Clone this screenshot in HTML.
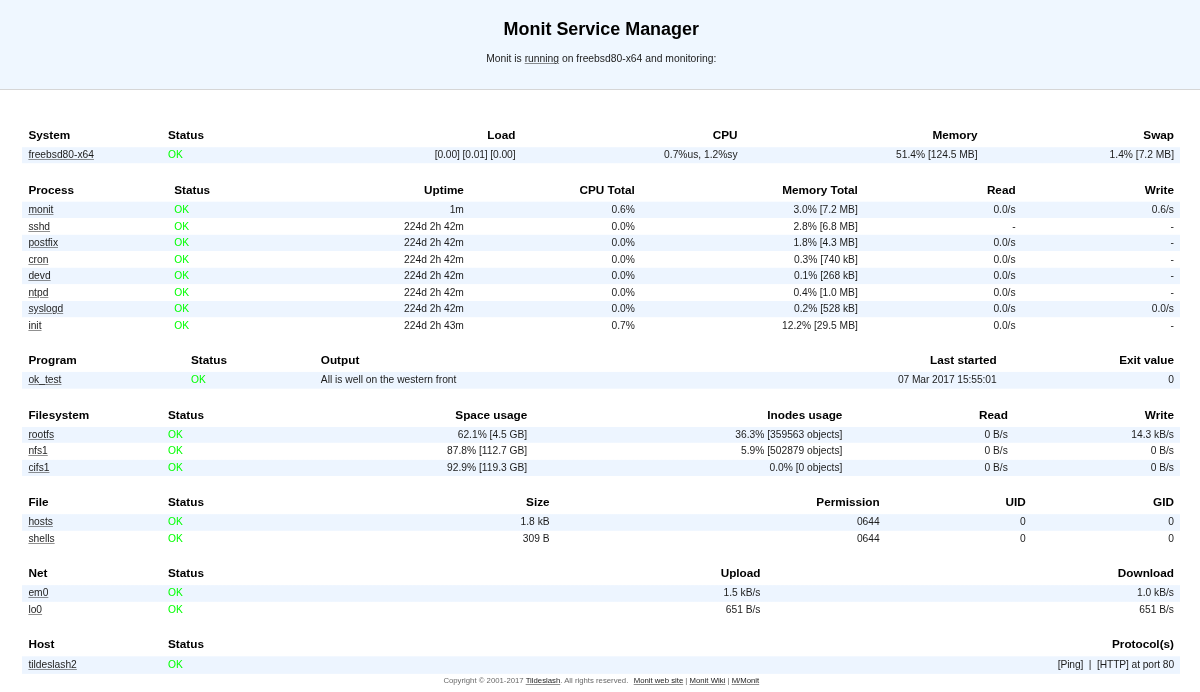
<!DOCTYPE html>
<html><head><meta charset="utf-8"><title>Monit: freebsd80-x64</title>
<style>
html,body{margin:0;padding:0;}
body{background:#fff;color:#1c1c1c;font-family:"Liberation Sans",sans-serif;font-size:10.25px;width:1200px;height:692px;overflow:hidden;position:relative;}
a{color:#1c1c1c;text-decoration:underline;text-decoration-color:rgba(34,34,34,.5);text-decoration-thickness:1px;}
#header{position:absolute;left:0;top:0;width:1200px;height:89px;background:#EFF7FF;border-bottom:1px solid #d6d6d6;}
#header h1{position:absolute;margin:0;left:0;width:1202.6px;text-align:center;top:18.8px;font-size:17.95px;line-height:20px;font-weight:bold;color:#000;white-space:nowrap;}
#header p{position:absolute;margin:0;left:0;width:1202.6px;text-align:center;top:52.4px;line-height:13px;white-space:nowrap;font-size:10.33px;}
.h,.r{position:absolute;left:0;width:1200px;height:0;}
.h{font-weight:bold;font-size:11.75px;color:#000;}
.s{position:absolute;left:22.1px;width:1158.2px;}
.h>span{position:absolute;top:0;line-height:13px;white-space:nowrap;}
.r>span{position:absolute;top:0;line-height:15px;white-space:nowrap;}
.g{color:#00ff00;}
.h,.r,#header h1,#header p,#footer{filter:blur(0.35px);}
#footer{position:absolute;left:0;width:1202.6px;top:675.5px;text-align:center;font-size:7.75px;line-height:10px;color:#6a6a6a;white-space:nowrap;}
#footer a{color:#222;}
</style></head><body>
<div id="header"><h1>Monit Service Manager</h1><p>Monit is <a>running</a> on freebsd80-x64 and monitoring:</p></div>

<div class="h" style="top:128px"><span style="left:28.4px">System</span><span style="left:168.0px">Status</span><span style="right:684.6px">Load</span><span style="right:462.4px">CPU</span><span style="right:222.5px">Memory</span><span style="right:26px">Swap</span></div>
<div class="s" style="top:147px;height:17px;background:linear-gradient(to bottom,rgba(237,245,255,0.8) 0,rgba(237,245,255,0.8) 1px,rgb(237,245,255) 1px,rgb(237,245,255) 16px,rgba(237,245,255,0.2) 16px)"></div>
<div class="r" style="top:147px"><span style="left:28.4px"><a>freebsd80-x64</a></span><span class="g" style="left:168.0px">OK</span><span style="right:684.6px"><span style="letter-spacing:-0.1px">[0.00] [0.01] [0.00]</span></span><span style="right:462.4px">0.7%us, 1.2%sy</span><span style="right:222.5px">51.4% [124.5 MB]</span><span style="right:26px">1.4% [7.2 MB]</span></div>
<div class="h" style="top:183px"><span style="left:28.4px">Process</span><span style="left:174.2px">Status</span><span style="right:736.1px">Uptime</span><span style="right:565.2px">CPU Total</span><span style="right:342.2px">Memory Total</span><span style="right:184.4px">Read</span><span style="right:26px">Write</span></div>
<div class="s" style="top:201px;height:17px;background:linear-gradient(to bottom,rgba(237,245,255,0.3) 0,rgba(237,245,255,0.3) 1px,rgb(237,245,255) 1px,rgb(237,245,255) 16px,rgba(237,245,255,1.0) 16px)"></div>
<div class="s" style="top:234px;height:17px;background:linear-gradient(to bottom,rgba(237,245,255,0.2) 0,rgba(237,245,255,0.2) 1px,rgb(237,245,255) 1px,rgb(237,245,255) 16px,rgba(237,245,255,1.0) 16px)"></div>
<div class="s" style="top:267px;height:18px;background:linear-gradient(to bottom,rgba(237,245,255,0.2) 0,rgba(237,245,255,0.2) 1px,rgb(237,245,255) 1px,rgb(237,245,255) 17px,rgba(237,245,255,0.1) 17px)"></div>
<div class="s" style="top:301px;height:17px;background:linear-gradient(to bottom,rgba(237,245,255,1.0) 0,rgba(237,245,255,1.0) 1px,rgb(237,245,255) 1px,rgb(237,245,255) 16px,rgba(237,245,255,0.2) 16px)"></div>
<div class="r" style="top:202px"><span style="left:28.4px"><a>monit</a></span><span class="g" style="left:174.2px">OK</span><span style="right:736.1px">1m</span><span style="right:565.2px">0.6%</span><span style="right:342.2px">3.0% [7.2 MB]</span><span style="right:184.4px">0.0/s</span><span style="right:26px">0.6/s</span></div>
<div class="r" style="top:219px"><span style="left:28.4px"><a>sshd</a></span><span class="g" style="left:174.2px">OK</span><span style="right:736.1px">224d 2h 42m</span><span style="right:565.2px">0.0%</span><span style="right:342.2px">2.8% [6.8 MB]</span><span style="right:184.4px">-</span><span style="right:26px">-</span></div>
<div class="r" style="top:235px"><span style="left:28.4px"><a>postfix</a></span><span class="g" style="left:174.2px">OK</span><span style="right:736.1px">224d 2h 42m</span><span style="right:565.2px">0.0%</span><span style="right:342.2px">1.8% [4.3 MB]</span><span style="right:184.4px">0.0/s</span><span style="right:26px">-</span></div>
<div class="r" style="top:252px"><span style="left:28.4px"><a>cron</a></span><span class="g" style="left:174.2px">OK</span><span style="right:736.1px">224d 2h 42m</span><span style="right:565.2px">0.0%</span><span style="right:342.2px">0.3% [740 kB]</span><span style="right:184.4px">0.0/s</span><span style="right:26px">-</span></div>
<div class="r" style="top:268px"><span style="left:28.4px"><a>devd</a></span><span class="g" style="left:174.2px">OK</span><span style="right:736.1px">224d 2h 42m</span><span style="right:565.2px">0.0%</span><span style="right:342.2px">0.1% [268 kB]</span><span style="right:184.4px">0.0/s</span><span style="right:26px">-</span></div>
<div class="r" style="top:285px"><span style="left:28.4px"><a>ntpd</a></span><span class="g" style="left:174.2px">OK</span><span style="right:736.1px">224d 2h 42m</span><span style="right:565.2px">0.0%</span><span style="right:342.2px">0.4% [1.0 MB]</span><span style="right:184.4px">0.0/s</span><span style="right:26px">-</span></div>
<div class="r" style="top:301px"><span style="left:28.4px"><a>syslogd</a></span><span class="g" style="left:174.2px">OK</span><span style="right:736.1px">224d 2h 42m</span><span style="right:565.2px">0.0%</span><span style="right:342.2px">0.2% [528 kB]</span><span style="right:184.4px">0.0/s</span><span style="right:26px">0.0/s</span></div>
<div class="r" style="top:318px"><span style="left:28.4px"><a>init</a></span><span class="g" style="left:174.2px">OK</span><span style="right:736.1px">224d 2h 43m</span><span style="right:565.2px">0.7%</span><span style="right:342.2px">12.2% [29.5 MB]</span><span style="right:184.4px">0.0/s</span><span style="right:26px">-</span></div>
<div class="h" style="top:353px"><span style="left:28.4px">Program</span><span style="left:191px">Status</span><span style="left:320.8px">Output</span><span style="right:203.4px">Last started</span><span style="right:26px">Exit value</span></div>
<div class="s" style="top:371px;height:18px;background:linear-gradient(to bottom,rgba(237,245,255,0.05) 0,rgba(237,245,255,0.05) 1px,rgb(237,245,255) 1px,rgb(237,245,255) 17px,rgba(237,245,255,0.7) 17px)"></div>
<div class="r" style="top:372px"><span style="left:28.4px"><a>ok_test</a></span><span class="g" style="left:191px">OK</span><span style="left:320.8px">All is well on the western front</span><span style="right:203.4px"><span style="letter-spacing:-0.08px">07 Mar 2017 15:55:01</span></span><span style="right:26px">0</span></div>
<div class="h" style="top:408px"><span style="left:28.4px">Filesystem</span><span style="left:168px">Status</span><span style="right:672.8px">Space usage</span><span style="right:357.6px">Inodes usage</span><span style="right:192.2px">Read</span><span style="right:26px">Write</span></div>
<div class="s" style="top:427px;height:16px;background:linear-gradient(to bottom,rgba(237,245,255,1.0) 0,rgba(237,245,255,1.0) 1px,rgb(237,245,255) 1px,rgb(237,245,255) 15px,rgba(237,245,255,0.8) 15px)"></div>
<div class="s" style="top:459px;height:17px;background:linear-gradient(to bottom,rgba(237,245,255,0.13) 0,rgba(237,245,255,0.13) 1px,rgb(237,245,255) 1px,rgb(237,245,255) 16px,rgba(237,245,255,1.0) 16px)"></div>
<div class="r" style="top:427px"><span style="left:28.4px"><a>rootfs</a></span><span class="g" style="left:168px">OK</span><span style="right:672.8px">62.1% [4.5 GB]</span><span style="right:357.6px">36.3% [359563 objects]</span><span style="right:192.2px">0 B/s</span><span style="right:26px">14.3 kB/s</span></div>
<div class="r" style="top:443px"><span style="left:28.4px"><a>nfs1</a></span><span class="g" style="left:168px">OK</span><span style="right:672.8px">87.8% [112.7 GB]</span><span style="right:357.6px">5.9% [502879 objects]</span><span style="right:192.2px">0 B/s</span><span style="right:26px">0 B/s</span></div>
<div class="r" style="top:460px"><span style="left:28.4px"><a>cifs1</a></span><span class="g" style="left:168px">OK</span><span style="right:672.8px">92.9% [119.3 GB]</span><span style="right:357.6px">0.0% [0 objects]</span><span style="right:192.2px">0 B/s</span><span style="right:26px">0 B/s</span></div>
<div class="h" style="top:495px"><span style="left:28.4px">File</span><span style="left:168px">Status</span><span style="right:650.4px">Size</span><span style="right:320.3px">Permission</span><span style="right:174.2px">UID</span><span style="right:26px">GID</span></div>
<div class="s" style="top:514px;height:17px;background:linear-gradient(to bottom,rgba(237,245,255,0.87) 0,rgba(237,245,255,0.87) 1px,rgb(237,245,255) 1px,rgb(237,245,255) 16px,rgba(237,245,255,0.8) 16px)"></div>
<div class="r" style="top:514px"><span style="left:28.4px"><a>hosts</a></span><span class="g" style="left:168px">OK</span><span style="right:650.4px">1.8 kB</span><span style="right:320.3px">0644</span><span style="right:174.2px">0</span><span style="right:26px">0</span></div>
<div class="r" style="top:531px"><span style="left:28.4px"><a>shells</a></span><span class="g" style="left:168px">OK</span><span style="right:650.4px">309 B</span><span style="right:320.3px">0644</span><span style="right:174.2px">0</span><span style="right:26px">0</span></div>
<div class="h" style="top:566px"><span style="left:28.4px">Net</span><span style="left:168px">Status</span><span style="right:439.5px">Upload</span><span style="right:26px">Download</span></div>
<div class="s" style="top:585px;height:17px;background:linear-gradient(to bottom,rgba(237,245,255,0.87) 0,rgba(237,245,255,0.87) 1px,rgb(237,245,255) 1px,rgb(237,245,255) 16px,rgba(237,245,255,0.85) 16px)"></div>
<div class="r" style="top:585px"><span style="left:28.4px"><a>em0</a></span><span class="g" style="left:168px">OK</span><span style="right:439.5px">1.5 kB/s</span><span style="right:26px">1.0 kB/s</span></div>
<div class="r" style="top:602px"><span style="left:28.4px"><a>lo0</a></span><span class="g" style="left:168px">OK</span><span style="right:439.5px">651 B/s</span><span style="right:26px">651 B/s</span></div>
<div class="h" style="top:637px"><span style="left:28.4px">Host</span><span style="left:168px">Status</span><span style="right:26px">Protocol(s)</span></div>
<div class="s" style="top:656px;height:18px;background:linear-gradient(to bottom,rgba(237,245,255,0.7) 0,rgba(237,245,255,0.7) 1px,rgb(237,245,255) 1px,rgb(237,245,255) 17px,rgba(237,245,255,0.9) 17px)"></div>
<div class="r" style="top:657px"><span style="left:28.4px"><a>tildeslash2</a></span><span class="g" style="left:168px">OK</span><span style="right:26px"><span style="letter-spacing:-0.09px">[Ping]&nbsp; |&nbsp; [HTTP] at port 80</span></span></div>
<div id="footer">Copyright &copy; 2001-2017 <a>Tildeslash</a>. All rights reserved. <span style="margin-left:3.2px"></span><a>Monit web site</a> | <a>Monit Wiki</a> | <a>M/Monit</a></div>
</body></html>
